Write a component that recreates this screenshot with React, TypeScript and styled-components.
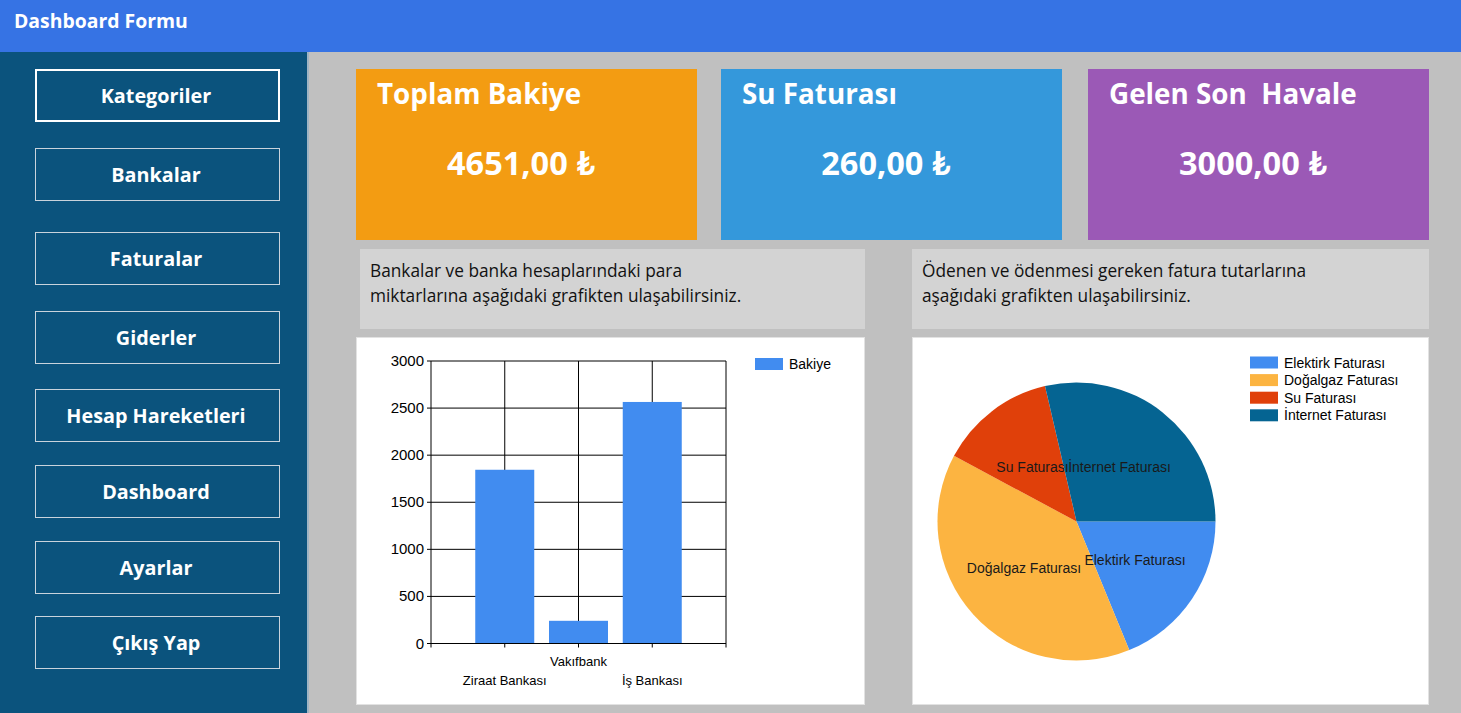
import React from "react";
import styled, { createGlobalStyle } from "styled-components";

const Global = createGlobalStyle`
  html, body { margin: 0; padding: 0; background: #c0c0c0; overflow: hidden; }
  * { box-sizing: border-box; }
`;

const UI_FONT = `"Open Sans", Lato, "DejaVu Sans", sans-serif`;
const CHART_FONT = `"Liberation Sans", Arial, sans-serif`;

const Shell = styled.div`
  width: 1461px;
  height: 713px;
  display: flex;
  flex-direction: column;
  font-family: ${UI_FONT};
`;

const Header = styled.header`
  height: 52px;
  flex: none;
  background: #3673e4;
  color: #fff;
  font-weight: 700;
  font-size: 19.4px;
  line-height: 24px;
  padding: 9px 0 0 14px;
`;

const Body = styled.div`
  flex: 1;
  display: flex;
  min-height: 0;
`;

const Sidebar = styled.nav`
  width: 309px;
  flex: none;
  background: #0b537d;
  border-right: 2px solid #9fb4c4;
  padding: 17px 0 0 35px;
  display: flex;
  flex-direction: column;
`;

const NavButton = styled.div<{ $active?: boolean; $top: number }>`
  width: 245px;
  height: 53px;
  margin-top: ${(p) => p.$top}px;
  border: ${(p) => (p.$active ? "2px solid #ffffff" : "1px solid #c9d3dc")};
  display: flex;
  align-items: center;
  justify-content: center;
  color: #fff;
  font-weight: 700;
  font-size: 19.8px;
  padding-right: 3px;
`;

const Content = styled.main`
  flex: 1;
  padding: 17px 0 0 47px;
  display: flex;
  flex-direction: column;
`;

const CardRow = styled.div`
  display: flex;
  gap: 24px;
  height: 171px;
`;

const StatCard = styled.div<{ $bg: string; $gap: number }>`
  width: 341px;
  margin-left: ${(p) => p.$gap}px;
  background: ${(p) => p.$bg};
  color: #fff;
  display: flex;
  flex-direction: column;
  padding: 5px 0 0 21px;
`;

const CardTitle = styled.div`
  font-size: 27.8px;
  line-height: 38px;
  font-weight: 700;
  white-space: pre;
`;

const CardValue = styled.div`
  font-size: 32.5px;
  line-height: 42px;
  font-weight: 700;
  text-align: center;
  margin-top: 30px;
  padding-right: 32px;
`;

const PanelGrid = styled.div`
  display: grid;
  grid-template-columns: 509px 517px;
  column-gap: 47px;
  margin-top: 9px;
`;

const PanelColumn = styled.div`
  display: flex;
  flex-direction: column;
  gap: 8px;
`;

const InfoBox = styled.div<{ $inset: number }>`
  height: 80px;
  margin-left: ${(p) => p.$inset}px;
  background: #d3d3d3;
  padding: 9px 0 0 10px;
  font-size: 17.3px;
  line-height: 25px;
  color: #111;
`;

const ChartBox = styled.div`
  height: 368px;
  background: #fff;
  border: 1px solid #e2e2e2;
`;

const bars = [
  { name: "Ziraat Bankası", value: 1845 },
  { name: "Vakıfbank", value: 241 },
  { name: "İş Bankası", value: 2565 },
];

function BarChart() {
  const x0 = 74, x1 = 369, yTop = 23, yBot = 305.5;
  const scale = (yBot - yTop) / 3000;
  const step = (x1 - x0) / 4;
  const ticks = [0, 500, 1000, 1500, 2000, 2500, 3000];
  return (
    <svg width="507" height="366" style={{ display: "block" }}>
      {ticks.map((t) => {
        const y = yBot - t * scale;
        return (
          <g key={t}>
            <line x1={x0 - 4} x2={x1} y1={y} y2={y} stroke="#000" strokeWidth={1} />
            <text x={67} y={y + 5} textAnchor="end" fontSize="15" fontFamily={CHART_FONT} fill="#000">{t}</text>
          </g>
        );
      })}
      {[0, 1, 2, 3, 4].map((i) => {
        const x = x0 + step * i;
        return <line key={i} x1={x} x2={x} y1={yTop} y2={yBot + 4} stroke="#000" strokeWidth={1} />;
      })}
      {bars.map((b, i) => {
        const cx = x0 + step * (i + 1);
        const h = b.value * scale;
        return <rect key={b.name} x={cx - 29.5} y={yBot - h} width={59} height={h} fill="#418cf0" />;
      })}
      <line x1={x0} x2={x1} y1={yBot} y2={yBot} stroke="#000" strokeWidth={1} />
      <text x={x0 + step * 2} y={328} textAnchor="middle" fontSize="13" fontFamily={CHART_FONT} fill="#000">Vakıfbank</text>
      <text x={x0 + step} y={347} textAnchor="middle" fontSize="13" fontFamily={CHART_FONT} fill="#000">Ziraat Bankası</text>
      <text x={x0 + step * 3} y={347} textAnchor="middle" fontSize="13" fontFamily={CHART_FONT} fill="#000">İş Bankası</text>
      <rect x={398} y={20} width={28} height={12} fill="#418cf0" />
      <text x={432} y={31} fontSize="14" fontFamily={CHART_FONT} fill="#000">Bakiye</text>
    </svg>
  );
}

const slices = [
  { name: "Elektirk Faturası", deg: 67.7, color: "#418cf0" },
  { name: "Doğalgaz Faturası", deg: 140.5, color: "#fcb441" },
  { name: "Su Faturası", deg: 48.7, color: "#e0400a" },
  { name: "İnternet Faturası", deg: 103.1, color: "#056492" },
];

const pieLabels = [
  { text: "Elektirk Faturası", x: 222, y: 227 },
  { text: "Doğalgaz Faturası", x: 111, y: 235 },
  { text: "Su Faturası", x: 119.5, y: 134 },
  { text: "İnternet Faturası", x: 206.5, y: 134 },
];

function PieChart() {
  const cx = 163.5, cy = 183.5, r = 139;
  let a = 0;
  const paths = slices.map((s) => {
    const a0 = (a * Math.PI) / 180;
    a += s.deg;
    const a1 = (a * Math.PI) / 180;
    const large = s.deg > 180 ? 1 : 0;
    const d = `M${cx},${cy} L${cx + r * Math.cos(a0)},${cy + r * Math.sin(a0)} A${r},${r} 0 ${large} 1 ${cx + r * Math.cos(a1)},${cy + r * Math.sin(a1)} Z`;
    return <path key={s.name} d={d} fill={s.color} />;
  });
  return (
    <svg width="516" height="366" style={{ display: "block" }}>
      {paths}
      {pieLabels.map((l) => (
        <text key={l.text} x={l.x} y={l.y} textAnchor="middle" fontSize="14" fontFamily={CHART_FONT} fill="#1a1a1a">{l.text}</text>
      ))}
      {slices.map((s, i) => (
        <g key={s.name}>
          <rect x={337} y={18.5 + i * 17.6} width={28} height={12} fill={s.color} />
          <text x={371} y={29.5 + i * 17.6} fontSize="14" fontFamily={CHART_FONT} fill="#000">{s.name}</text>
        </g>
      ))}
    </svg>
  );
}

const navItems = [
  { label: "Kategoriler", top: 0, active: true },
  { label: "Bankalar", top: 26 },
  { label: "Faturalar", top: 31 },
  { label: "Giderler", top: 26 },
  { label: "Hesap Hareketleri", top: 25 },
  { label: "Dashboard", top: 23 },
  { label: "Ayarlar", top: 23 },
  { label: "Çıkış Yap", top: 22 },
];

export default function App() {
  return (
    <>
      <Global />
      <Shell>
        <Header>Dashboard Formu</Header>
        <Body>
          <Sidebar>
            {navItems.map((n) => (
              <NavButton key={n.label} $active={n.active} $top={n.top}>{n.label}</NavButton>
            ))}
          </Sidebar>
          <Content>
            <CardRow>
              <StatCard $bg="#f39c12" $gap={0}>
                <CardTitle>Toplam Bakiye</CardTitle>
                <CardValue>4651,00 ₺</CardValue>
              </StatCard>
              <StatCard $bg="#3498db" $gap={0}>
                <CardTitle>Su Faturası</CardTitle>
                <CardValue>260,00 ₺</CardValue>
              </StatCard>
              <StatCard $bg="#9b59b6" $gap={2}>
                <CardTitle>Gelen Son  Havale</CardTitle>
                <CardValue>3000,00 ₺</CardValue>
              </StatCard>
            </CardRow>
            <PanelGrid>
              <PanelColumn>
                <InfoBox $inset={4}>
                  Bankalar ve banka hesaplarındaki para<br />
                  miktarlarına aşağıdaki grafikten ulaşabilirsiniz.
                </InfoBox>
                <ChartBox><BarChart /></ChartBox>
              </PanelColumn>
              <PanelColumn>
                <InfoBox $inset={0}>
                  Ödenen ve ödenmesi gereken fatura tutarlarına<br />
                  aşağıdaki grafikten ulaşabilirsiniz.
                </InfoBox>
                <ChartBox><PieChart /></ChartBox>
              </PanelColumn>
            </PanelGrid>
          </Content>
        </Body>
      </Shell>
    </>
  );
}
